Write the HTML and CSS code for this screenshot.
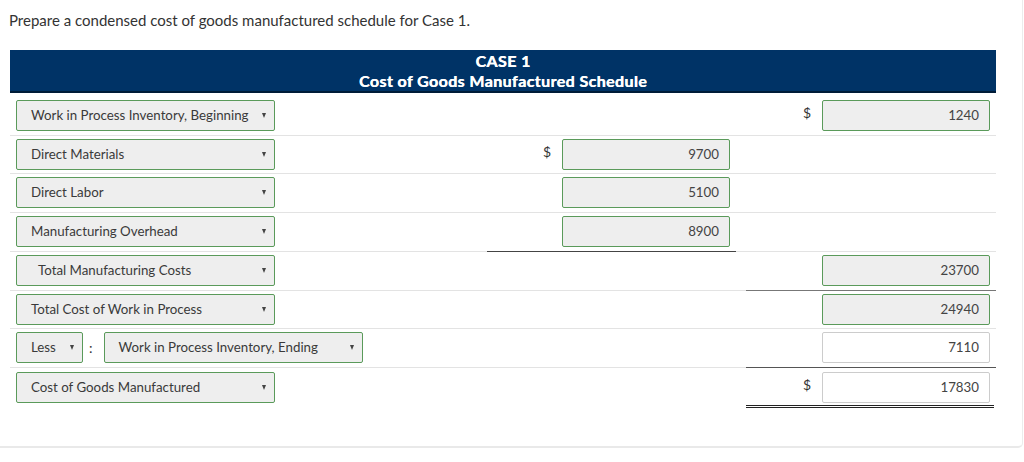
FILE: index.html
```html
<!DOCTYPE html>
<html lang="en">
<head>
<meta charset="utf-8">
<title>Cost of Goods Manufactured Schedule</title>
<link rel="stylesheet" href="styles.css">
</head>
<body>
<div class="card">
  <p class="prompt">Prepare a condensed cost of goods manufactured schedule for Case 1.</p>
  <div class="sheet">
    <div class="head">
      <div>CASE 1</div>
      <div>Cost of Goods Manufactured Schedule</div>
    </div>

    <div class="row first">
      <div class="cell label"><div class="sel">Work in Process Inventory, Beginning<span class="arr"></span></div></div>
      <div class="cell amt"></div>
      <div class="cell gap"></div>
      <div class="cell amt"><span class="cur">$</span><div class="num filled">1240</div></div>
    </div>

    <div class="row tight">
      <div class="cell label"><div class="sel">Direct Materials<span class="arr"></span></div></div>
      <div class="cell amt"><span class="cur">$</span><div class="num filled">9700</div></div>
      <div class="cell gap"></div>
      <div class="cell amt"></div>
    </div>

    <div class="row">
      <div class="cell label"><div class="sel">Direct Labor<span class="arr"></span></div></div>
      <div class="cell amt"><div class="num filled">5100</div></div>
      <div class="cell gap"></div>
      <div class="cell amt"></div>
    </div>

    <div class="row">
      <div class="cell label"><div class="sel">Manufacturing Overhead<span class="arr"></span></div></div>
      <div class="cell amt rule-dark"><div class="num filled">8900</div></div>
      <div class="cell gap"></div>
      <div class="cell amt"></div>
    </div>

    <div class="row">
      <div class="cell label"><div class="sel indent">Total Manufacturing Costs<span class="arr"></span></div></div>
      <div class="cell amt"></div>
      <div class="cell gap"></div>
      <div class="cell amt rule-mid"><div class="num filled">23700</div></div>
    </div>

    <div class="row tight">
      <div class="cell label"><div class="sel">Total Cost of Work in Process<span class="arr"></span></div></div>
      <div class="cell amt"></div>
      <div class="cell gap"></div>
      <div class="cell amt"><div class="num filled">24940</div></div>
    </div>

    <div class="row">
      <div class="cell label">
        <div class="pair">
          <div class="sel small">Less<span class="arr"></span></div>
          <span class="colon">:</span>
          <div class="sel">Work in Process Inventory, Ending<span class="arr"></span></div>
        </div>
      </div>
      <div class="cell amt"></div>
      <div class="cell gap"></div>
      <div class="cell amt rule-dark2"><div class="num plain">7110</div></div>
    </div>

    <div class="row last">
      <div class="cell label"><div class="sel">Cost of Goods Manufactured<span class="arr"></span></div></div>
      <div class="cell amt"></div>
      <div class="cell gap"></div>
      <div class="cell amt rule-double"><span class="cur">$</span><div class="num plain">17830</div></div>
    </div>
  </div>
</div>
</body>
</html>
```

FILE: styles.css
```css
html, body {
  margin: 0;
  padding: 0;
  background: #ffffff;
}

body {
  font-family: Lato, "Open Sans", "Liberation Sans", sans-serif;
  color: #333333;
}

.card {
  width: 1022px;
  height: 446px;
  border-right: 1px solid #ececec;
  border-bottom: 2px solid #e9e9e9;
  border-bottom-right-radius: 5px;
  box-sizing: content-box;
}

.prompt {
  margin: 0;
  padding: 10px 9px 0;
  font-size: 15px;
  line-height: 20px;
  color: #333333;
}

.sheet {
  margin: 20px 0 0 10px;
  width: 986px;
}

.head {
  background: #003366;
  color: #ffffff;
  text-align: center;
  font-weight: 700;
  font-size: 16px;
  letter-spacing: 0.4px;
  line-height: 20px;
  padding: 1px 0 0;
  height: 40px;
  border-bottom: 2px solid #001c38;
  text-shadow: 0.4px 0 0 #ffffff;
}

.row {
  display: grid;
  grid-template-columns: 477px 249px 10px 250px;
}

.cell {
  padding: 3px 0 4px;
  border-bottom: 1px solid #e3e3e3;
  min-height: 31px;
}

.row.tight .cell {
  padding-bottom: 3px;
}

.row.first .cell {
  padding-top: 7px;
}

.row.last .cell {
  border-bottom: none;
  padding-top: 4px;
  padding-bottom: 2px;
}

.label {
  padding-left: 6px;
}

.amt {
  display: flex;
  justify-content: flex-end;
  align-items: center;
  padding-right: 6px;
}

.rule-dark {
  border-bottom-color: #444444;
}

.rule-mid {
  border-bottom-color: #777777;
}

.rule-dark2 {
  border-bottom-color: #555555;
}

.row.last .rule-double {
  border-bottom: 3px double #222222;
  margin-right: 2px;
  padding-right: 4px;
}

.sel {
  position: relative;
  box-sizing: border-box;
  width: 259px;
  height: 31px;
  padding: 0 20px 0 14px;
  background: #eeeeee;
  border: 1px solid #5a9a5a;
  border-radius: 2px;
  font-size: 13.3px;
  line-height: 29px;
  color: #3a3a3a;
  white-space: nowrap;
}

.sel.indent {
  padding-left: 21px;
}

.sel.small {
  width: 67px;
}

.arr {
  position: absolute;
  right: 8px;
  top: 12px;
  width: 0;
  height: 0;
  border-left: 2.5px solid transparent;
  border-right: 2.5px solid transparent;
  border-top: 5px solid #444444;
}

.pair {
  display: flex;
  align-items: center;
}

.colon {
  margin: 0 11px 0 6px;
  font-size: 14px;
  color: #333333;
}

.cur {
  font-size: 14px;
  color: #333333;
  margin-right: 11px;
  margin-top: -6px;
}

.num {
  box-sizing: border-box;
  width: 168px;
  height: 31px;
  padding-right: 10px;
  text-align: right;
  font-size: 13.3px;
  line-height: 29px;
  color: #444444;
  border-radius: 2px;
}

.num.filled {
  background: #eeeeee;
  border: 1px solid #5a9a5a;
}

.num.plain {
  background: #ffffff;
  border: 1px solid #cccccc;
}
```
